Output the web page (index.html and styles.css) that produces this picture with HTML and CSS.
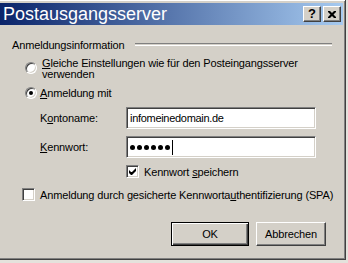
FILE: index.html
```html
<!DOCTYPE html>
<html lang="de">
<head>
    <meta charset="UTF-8">
    <title>Postausgangsserver</title>
    <link rel="stylesheet" href="styles.css">
</head>
<body>
    <div class="window">
        <div class="titlebar">
            <span class="title">Postausgangsserver</span>
            <div class="caption-buttons">
                <div class="cap-btn help">?</div>
                <div class="cap-btn close">
                    <svg width="8" height="7" viewBox="0 0 8 7">
                        <path d="M0 0h2l2 2 2-2h2v1l-2.5 2.5 2.5 2.5v1h-2l-2-2-2 2h-2v-1l2.5-2.5-2.5-2.5z" fill="#000"/>
                    </svg>
                </div>
            </div>
        </div>

        <div class="content">
            <div class="group-head">
                <span>Anmeldungsinformation</span>
                <div class="etched"></div>
            </div>

            <div class="radio-row first">
                <span class="radio"></span>
                <span class="radio-text"><u>G</u>leiche Einstellungen wie für den Posteingangsserver<br>verwenden</span>
            </div>
            <div class="radio-row second">
                <span class="radio checked"><span class="dot"></span></span>
                <span class="radio-text"><u>A</u>nmeldung mit</span>
            </div>

            <div class="field-row account">
                <label class="field-label">K<u>o</u>ntoname:</label>
                <div class="textbox">infomeinedomain.de</div>
            </div>
            <div class="field-row password">
                <label class="field-label"><u>K</u>ennwort:</label>
                <div class="textbox">
                    <span class="pw-dot"></span><span class="pw-dot"></span><span class="pw-dot"></span>
                    <span class="pw-dot"></span><span class="pw-dot"></span><span class="pw-dot"></span>
                    <span class="caret"></span>
                </div>
            </div>

            <div class="check-row save">
                <span class="checkbox">
                    <svg width="7" height="7" viewBox="0 0 7 7"><path d="M0 2v3l2 2h1l4-4v-3l-4 4h-1z" fill="#000"/></svg>
                </span>
                <span>Kennwort <u>s</u>peichern</span>
            </div>

            <div class="check-row spa">
                <span class="checkbox"></span>
                <span>Anmeldung durch gesicherte Kennworta<u>u</u>thentifizierung (SPA)</span>
            </div>

            <div class="buttons">
                <div class="btn default">OK</div>
                <div class="btn">Abbrechen</div>
            </div>
        </div>
    </div>
</body>
</html>
```

FILE: styles.css
```css
body {
    margin: 0;
    background-color: #e4e2dc;
    font-family: "Liberation Sans", Arial, sans-serif;
    font-size: 11px;
    letter-spacing: -0.15px;
    color: #000;
    overflow: hidden;
}

.window {
    margin-left: -4px;
    margin-top: -1px;
    width: 350px;
    height: 261px;
    box-sizing: border-box;
    padding: 2px;
    background-color: #d4d0c8;
    border: 1px solid;
    border-color: #d4d0c8 #404040 #404040 #d4d0c8;
    box-shadow: inset 1px 1px #fff, inset -1px -1px #808080;
    display: flex;
    flex-direction: column;
}

.titlebar {
    height: 22px;
    margin-top: 1px;
    margin-left: 1px;
    background: linear-gradient(to right, #0a246a, #a6caf0);
    display: flex;
    align-items: center;
    justify-content: space-between;
}

.title {
    color: #fff;
    font-size: 18px;
    padding-left: 3px;
    letter-spacing: 0;
}

.caption-buttons {
    display: flex;
    gap: 2px;
    margin-right: 2px;
}

.cap-btn {
    width: 18px;
    height: 16px;
    box-sizing: border-box;
    background-color: #d4d0c8;
    border: 1px solid;
    border-color: #fff #404040 #404040 #fff;
    box-shadow: inset -1px -1px #808080;
    display: flex;
    align-items: center;
    justify-content: center;
    font-weight: bold;
    font-size: 13px;
    line-height: 14px;
}

.content {
    flex: 1;
}

.group-head {
    display: flex;
    align-items: center;
    margin-top: 13px;
    padding-left: 13px;
    height: 13px;
}

.etched {
    width: 197px;
    margin-left: 11px;
    height: 1px;
    border-top: 1px solid #808080;
    border-bottom: 1px solid #fff;
}

.radio-row {
    display: flex;
    align-items: flex-start;
    padding-left: 26px;
}

.radio-row.first {
    margin-top: 11px;
}

.radio-row.second {
    margin-top: 7px;
}

.radio {
    width: 12px;
    height: 12px;
    box-sizing: border-box;
    border-radius: 50%;
    border: 1px solid;
    border-color: #808080 #fff #fff #808080;
    box-shadow: inset 1px 1px #404040, inset -1px -1px #d4d0c8;
    background-color: #fff;
    display: flex;
    align-items: center;
    justify-content: center;
    flex-shrink: 0;
}

.dot {
    width: 4px;
    height: 4px;
    border-radius: 50%;
    background-color: #000;
}

.radio-text {
    margin-left: 5px;
    line-height: 11px;
    margin-top: -4px;
}

.radio-row.second .radio-text {
    margin-top: 0;
    margin-left: 3px;
    line-height: 13px;
}

.field-row {
    display: flex;
    align-items: center;
    padding-left: 41px;
}

.field-row.account {
    margin-top: 7px;
}

.field-row.password {
    margin-top: 7px;
}

.field-label {
    width: 86px;
}

.textbox {
    width: 190px;
    height: 22px;
    box-sizing: border-box;
    background-color: #fff;
    border: 1px solid;
    border-color: #808080 #fff #fff #808080;
    box-shadow: inset 1px 1px #404040, inset -1px -1px #d4d0c8;
    padding: 2px 3px;
    display: flex;
    align-items: center;
    gap: 2px;
    font-size: 11px;
    letter-spacing: -0.3px;
}

.pw-dot {
    width: 5px;
    height: 5px;
    border-radius: 50%;
    background-color: #000;
}

.caret {
    width: 1px;
    height: 15px;
    background-color: #000;
}

.check-row {
    display: flex;
    align-items: center;
}

.check-row.save {
    padding-left: 127px;
    margin-top: 7px;
}

.check-row.spa {
    padding-left: 23px;
    margin-top: 10px;
}

.checkbox {
    width: 13px;
    height: 13px;
    box-sizing: border-box;
    background-color: #fff;
    border: 1px solid;
    border-color: #808080 #fff #fff #808080;
    box-shadow: inset 1px 1px #404040, inset -1px -1px #d4d0c8;
    margin-right: 5px;
    display: flex;
    align-items: center;
    justify-content: center;
}

.buttons {
    display: flex;
    gap: 7px;
    padding-left: 172px;
    margin-top: 21px;
}

.btn {
    width: 70px;
    height: 24px;
    box-sizing: border-box;
    border: 1px solid;
    border-color: #fff #404040 #404040 #fff;
    box-shadow: inset -1px -1px #808080;
    display: flex;
    align-items: center;
    justify-content: center;
}

.btn.default {
    width: 78px;
    border: 1px solid #000;
    box-shadow: inset 1px 1px #fff, inset -1px -1px #404040, inset -2px -2px #808080;
}
```
